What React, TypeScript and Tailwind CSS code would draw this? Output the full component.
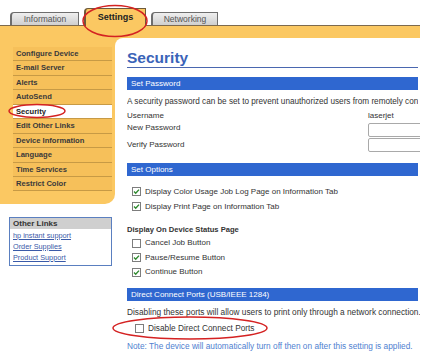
import React from "react";

function Check({ checked }: { checked: boolean }) {
  return (
    <svg width="9" height="9" viewBox="0 0 9 9" className="shrink-0">
      <rect x="0.5" y="0.5" width="8" height="8" fill="#fff" stroke="#7d7d7d" />
      {checked && (
        <path d="M2 4.6 L3.7 6.3 L7 2.6" fill="none" stroke="#2f8a2f" strokeWidth="1.4" />
      )}
    </svg>
  );
}

const navItems = [
  "Configure Device",
  "E-mail Server",
  "Alerts",
  "AutoSend",
  "Security",
  "Edit Other Links",
  "Device Information",
  "Language",
  "Time Services",
  "Restrict Color",
];

function Bar({ children }: { children: React.ReactNode }) {
  return (
    <div className="h-[13px] bg-[#2f67d0] pl-[4px] text-[8px] leading-[13px] text-white whitespace-nowrap">
      {children}
    </div>
  );
}

function CheckRow({ checked, label, cls }: { checked: boolean; label: string; cls: string }) {
  return (
    <div className={`flex items-center gap-[4px] pl-[5px] text-[8px] whitespace-nowrap ${cls}`}>
      <Check checked={checked} />
      <span>{label}</span>
    </div>
  );
}

export default function App() {
  return (
    <div className="relative w-[429px] h-[362px] overflow-hidden bg-white font-['Liberation_Sans',Arial,sans-serif] text-[#333]">
      <div className="w-[420px]">
        {/* Tabs */}
        <div className="flex h-[26px] items-end gap-[5px] border-b border-[#7d6a4e] pl-[10px]">
          <div className="flex h-[13px] w-[69px] items-center justify-center rounded-tl-[4px] border-l-2 border-t border-r border-[#6e6e6e] bg-gradient-to-b from-[#efefef] to-[#cfcfcf] text-[8.5px] text-[#555]">
            Information
          </div>
          <div className="-mb-px flex h-[18px] w-[62px] items-center justify-center rounded-tl-[4px] border-l-2 border-t border-r border-[#6e5a3a] bg-[#fbc862] pt-[1px] text-[9px] font-bold text-[#222]">
            Settings
          </div>
          <div className="flex h-[13px] w-[67px] items-center justify-center rounded-tl-[4px] border-l-2 border-t border-r border-[#6e6e6e] bg-gradient-to-b from-[#efefef] to-[#cfcfcf] text-[8.5px] text-[#555]">
            Networking
          </div>
        </div>

        <div className="flex">
          {/* Left column */}
          <div className="w-[115px] shrink-0">
            <div className="h-[178px] rounded-br-[10px] bg-[#fbc862] pl-[13px] pr-[3px] pt-[21px]">
              <div className="flex flex-col">
                {navItems.map((n) => (
                  <div
                    key={n}
                    className={`flex h-[14.45px] items-center border-b border-[#c79a45] pl-[3px] text-[7.6px] font-bold ${
                      n === "Security" ? "bg-white text-[#222]" : "bg-[#f6c05a] text-[#3a3a3a]"
                    }`}
                  >
                    {n}
                  </div>
                ))}
              </div>
            </div>
            <div className="ml-[9px] mt-[13px] h-[49px] w-[103px] border border-[#5a7fc0] bg-white">
              <div className="h-[11px] bg-[#cfcfcf] pl-[3px] text-[8px] font-bold leading-[11px] text-[#333]">
                Other Links
              </div>
              <div className="flex flex-col pl-[3px] pt-[1px] text-[7.3px] leading-[11px] text-[#3a5aa8] underline">
                <span>hp instant support</span>
                <span>Order Supplies</span>
                <span>Product Support</span>
              </div>
            </div>
          </div>

          {/* Main column */}
          <div className="min-w-0 flex-1 bg-[#fbc862] pt-[12px] h-[336px]">
            <div className="h-full overflow-hidden rounded-tl-[8px] bg-white pl-[12px] pr-[2px]">
              <div className="border-b border-[#4a67b0] pt-[11px] text-[15.5px] font-bold leading-[18px] text-[#3a63b8]">
                Security
              </div>
              <div className="mt-[9px]">
                <Bar>Set Password</Bar>
              </div>
              <div className="mt-[6px] overflow-hidden whitespace-nowrap text-[8.2px] leading-[12px]">
                A security password can be set to prevent unauthorized users from remotely configuring the device.
              </div>
              <div className="mt-[2px] flex h-[12px] items-center text-[8px]">
                <span className="w-[241px] shrink-0">Username</span>
                <span>laserjet</span>
              </div>
              <div className="mt-[1px] flex h-[14px] text-[8px]">
                <span className="w-[241px] shrink-0 leading-[9px]">New Password</span>
                <div className="h-[14px] w-[70px] shrink-0 rounded-[2px] border border-[#a9a9a9] bg-white" />
              </div>
              <div className="mt-[1px] flex h-[14px] items-center text-[8px]">
                <span className="w-[241px] shrink-0">Verify Password</span>
                <div className="h-[14px] w-[70px] shrink-0 rounded-[2px] border border-[#a9a9a9] bg-white" />
              </div>

              <div className="mt-[11px]">
                <Bar>Set Options</Bar>
              </div>
              <div className="mt-[8px]">
                <CheckRow checked label="Display Color Usage Job Log Page on Information Tab" cls="h-[15px]" />
                <CheckRow checked label="Display Print Page on Information Tab" cls="h-[15px]" />
              </div>
              <div className="mt-[9px] h-[13px] text-[7.6px] font-bold leading-[13px] text-[#333]">
                Display On Device Status Page
              </div>
              <div>
                <CheckRow checked={false} label="Cancel Job Button" cls="h-[14.5px]" />
                <CheckRow checked label="Pause/Resume Button" cls="h-[14.5px]" />
                <CheckRow checked label="Continue Button" cls="h-[14.5px]" />
              </div>
              <div className="mt-[8px]">
                <Bar>Direct Connect Ports (USB/IEEE 1284)</Bar>
              </div>
              <div className="mt-[5px] whitespace-nowrap text-[8.3px] leading-[12px]">
                Disabling these ports will allow users to print only through a network connection.
              </div>
              <div className="mt-[4px] flex h-[14px] items-center gap-[4px] pl-[8px] text-[8.3px] whitespace-nowrap">
                <Check checked={false} />
                <span>Disable Direct Connect Ports</span>
              </div>
              <div className="mt-[4px] whitespace-nowrap text-[8.3px] leading-[12px] text-[#4f7fd0]">
                Note: The device will automatically turn off then on after this setting is applied.
              </div>
            </div>
          </div>
        </div>
      </div>

      {/* Red annotation ellipses */}
      <svg className="pointer-events-none absolute left-0 top-0" width="429" height="362" viewBox="0 0 429 362">
        <ellipse cx="115" cy="21" rx="32" ry="15.5" fill="none" stroke="#d42222" strokeWidth="1.5" />
        <ellipse cx="37" cy="111" rx="28" ry="6.5" fill="none" stroke="#d42222" strokeWidth="1.5" />
        <ellipse cx="190" cy="328" rx="77" ry="11" fill="none" stroke="#d42222" strokeWidth="1.5" />
      </svg>
    </div>
  );
}
